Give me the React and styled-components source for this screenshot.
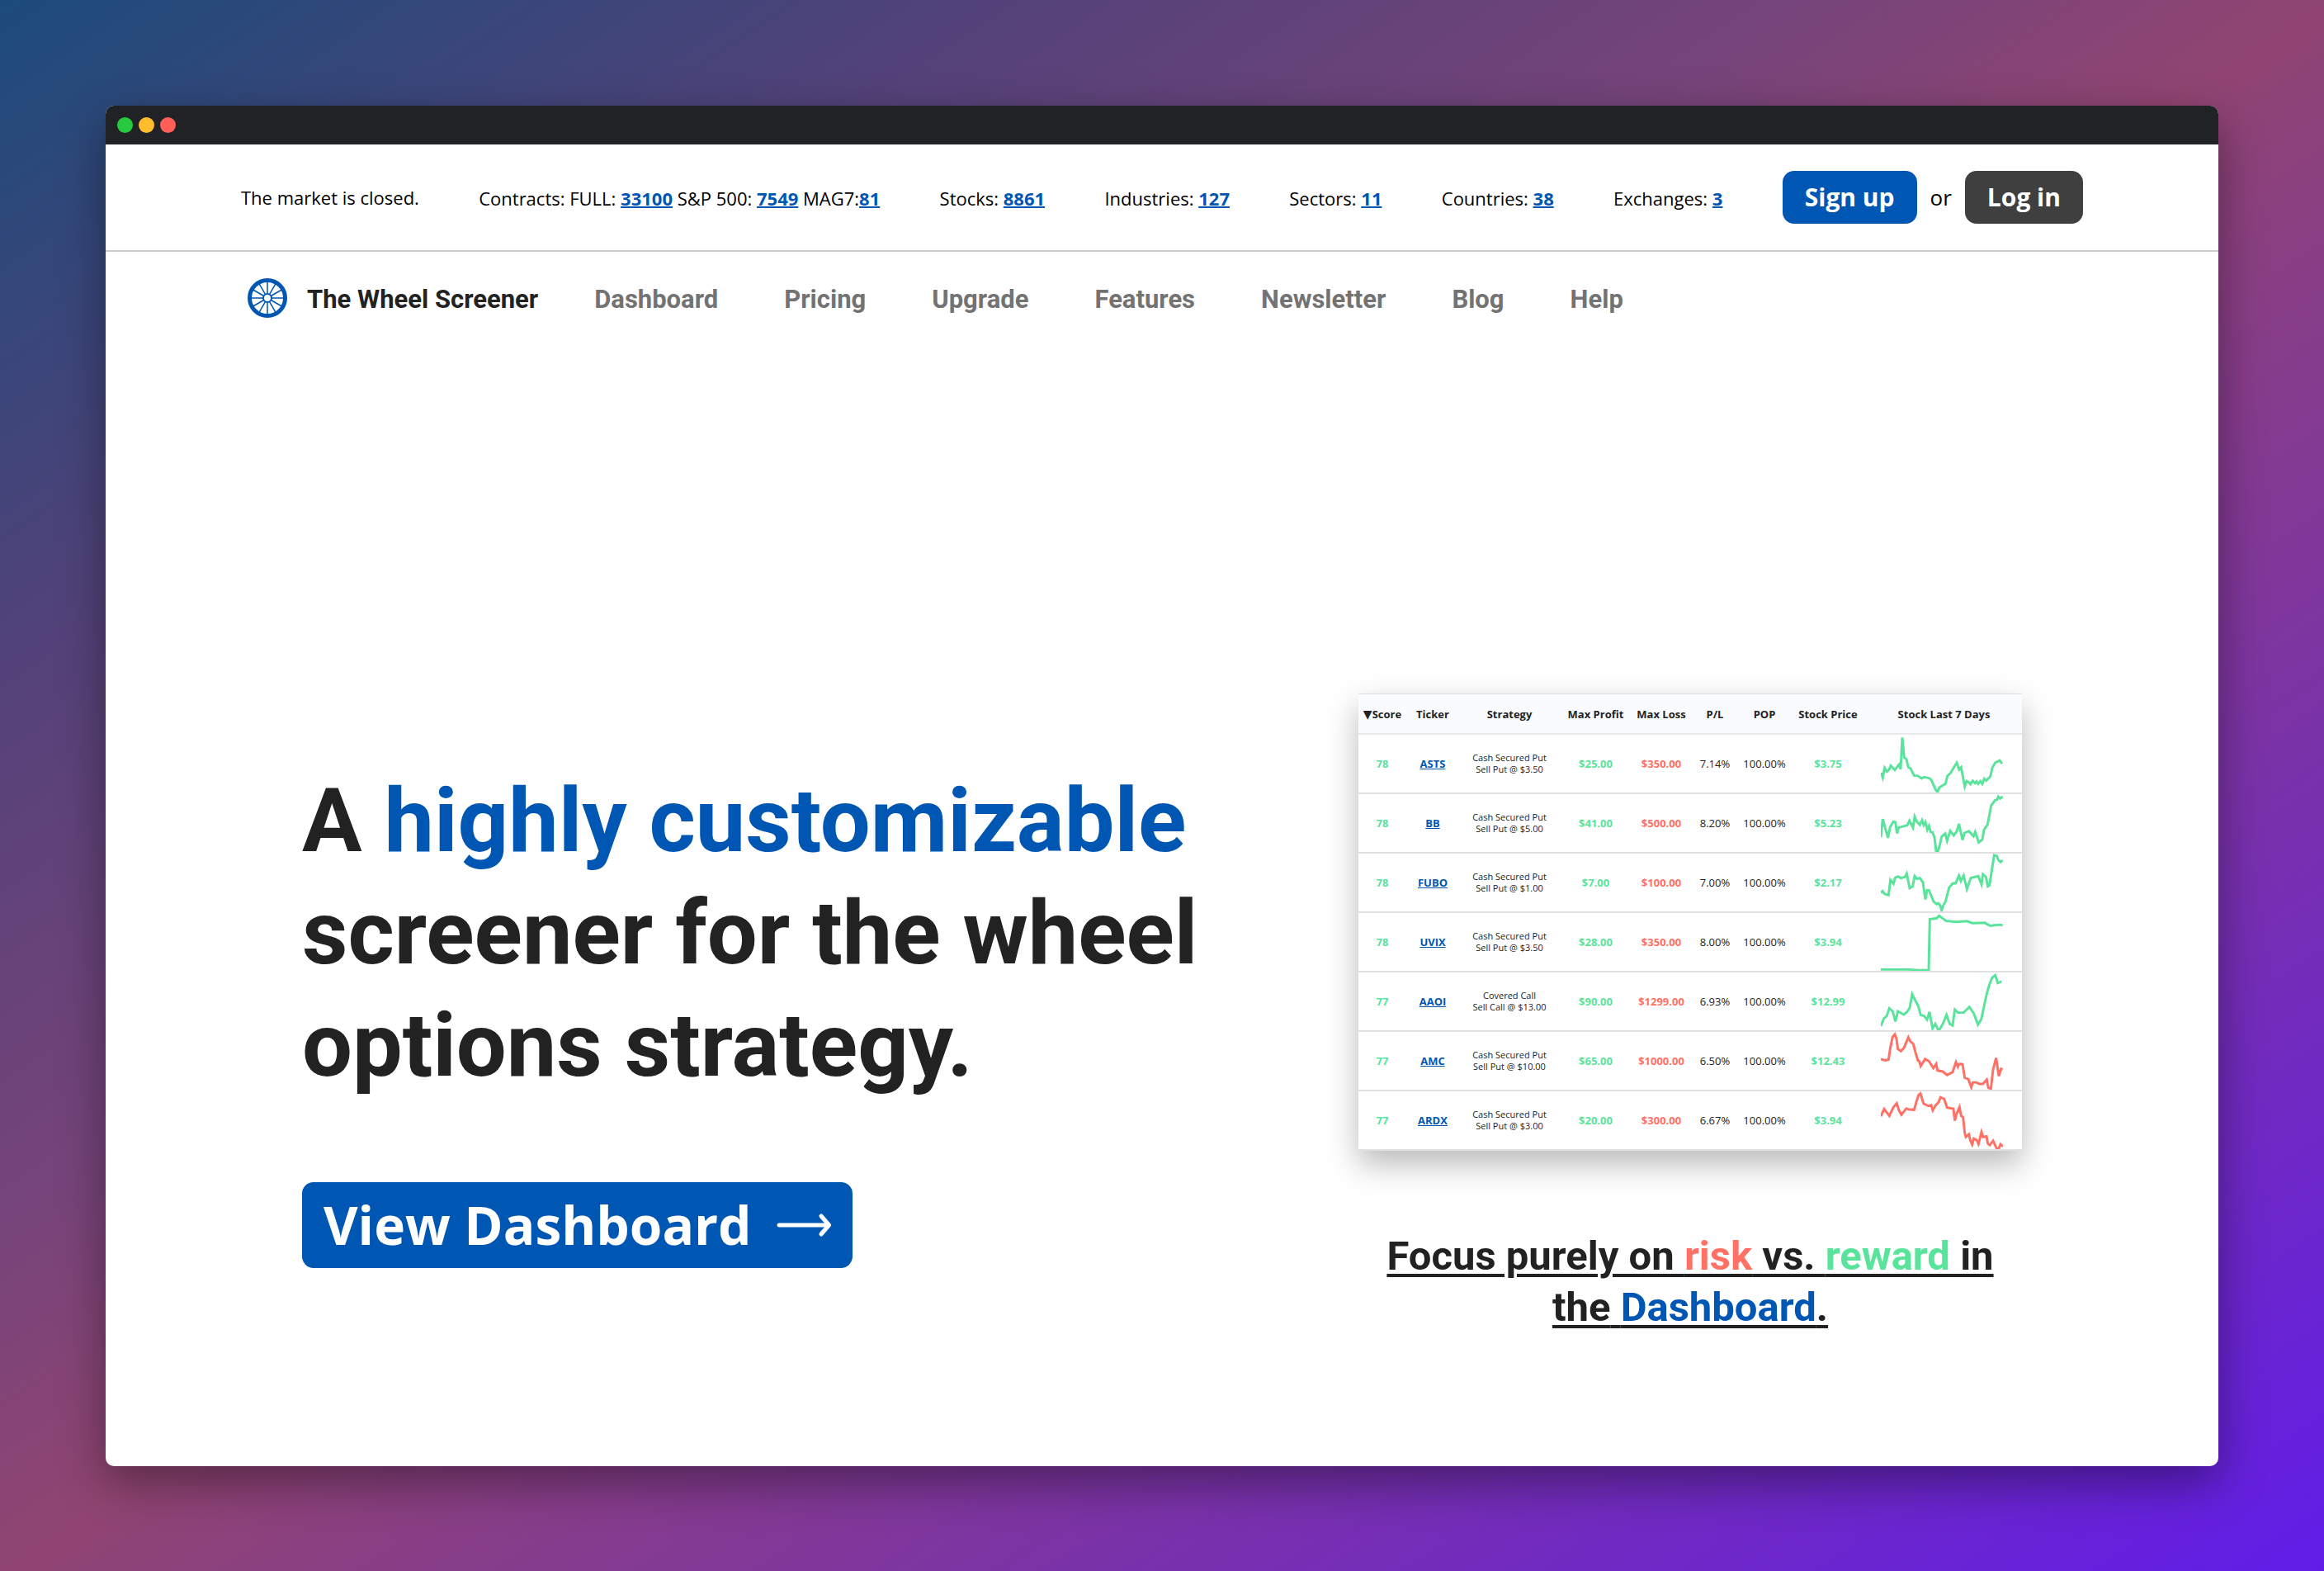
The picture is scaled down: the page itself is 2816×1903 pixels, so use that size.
import React from 'react';
import styled, { createGlobalStyle } from 'styled-components';

const body = "'Open Sans', 'Noto Sans', sans-serif";
const display = "Roboto, 'Open Sans', sans-serif";
const blue = '#0056b3';
const ink = '#222222';
const green = '#5ae49b';
const red = '#ff7065';

const GlobalStyle = createGlobalStyle`
  *, *::before, *::after { box-sizing: border-box; }
  body { margin: 0; font-family: ${body}; color: ${ink}; }
`;

const Backdrop = styled.div`
  min-height: 100vh;
  padding: 128px 128px 127px;
  display: flex;
  background: linear-gradient(to bottom right, #1c4b7b 0%, #544279 22%, #76447a 39%, #904572 50%, #611de8 100%);
`;

const BrowserWindow = styled.div`
  flex: 1;
  min-width: 0;
  display: flex;
  flex-direction: column;
  border-radius: 10px;
  overflow: hidden;
  background: #ffffff;
  box-shadow: 0 20px 56px rgba(0, 0, 0, 0.4);
`;

const TitleBar = styled.div`
  height: 47px;
  padding: 0 14px;
  display: flex;
  align-items: center;
  gap: 7px;
  background: #212226;
`;

const Light = styled.span`
  width: 19px;
  height: 19px;
  border-radius: 50%;
  background: ${(p) => p.$color};
`;

const StatusBar = styled.div`
  height: 130px;
  padding: 0 164px;
  display: flex;
  align-items: center;
  justify-content: space-between;
  border-bottom: 2px solid #cccccc;
  color: #000000;
  font-size: 22px;
  line-height: 32px;
  white-space: nowrap;
`;

const Stat = styled.span`
  padding-top: 2px;
`;

const StatLink = styled.a`
  color: ${blue};
  font-weight: 700;
  text-decoration: underline;
  text-decoration-thickness: 2px;
`;

const Account = styled.div`
  display: flex;
  align-items: center;
  gap: 16px;
  font-size: 26px;
`;

const AccountButton = styled.button`
  height: 64px;
  padding: 0 27px;
  border: 0;
  border-radius: 14px;
  background: ${(p) => (p.$dark ? '#3f3f3f' : blue)};
  color: #ffffff;
  font: 700 30px/40px ${body};
`;

const NavBar = styled.header`
  height: 112px;
  padding: 0 172px;
  display: flex;
  align-items: center;
  gap: 68px;
  font: 700 31px/40px ${display};
  white-space: nowrap;
`;

const Brand = styled.a`
  display: flex;
  align-items: center;
  gap: 24px;
  color: ${ink};
  text-decoration: none;
`;

const BrandName = styled.span`
  padding-top: 4px;
`;

const NavLinks = styled.nav`
  padding-top: 4px;
  display: flex;
  gap: 80px;
`;

const NavLink = styled.a`
  color: #737373;
  text-decoration: none;
`;

const Hero = styled.main`
  flex: 1;
  padding: 423px 238px 0;
  display: grid;
  grid-template-columns: minmax(0, 1280fr) minmax(0, 804fr);
  align-items: center;
  align-content: start;
`;

const Pitch = styled.section`
  display: flex;
  flex-direction: column;
  align-items: flex-start;
  gap: 98px;
`;

const Headline = styled.h1`
  margin: 0;
  max-width: 1160px;
  font: 700 108px/136px ${display};
`;

const Tint = styled.span`
  color: ${(p) => p.$color};
`;

const DashboardButton = styled.a`
  height: 104px;
  padding: 0 24px 0 26px;
  display: flex;
  align-items: center;
  gap: 30px;
  border-radius: 14px;
  background: ${blue};
  color: #ffffff;
  font-size: 64px;
  font-weight: 700;
  line-height: 88px;
  text-decoration: none;
  white-space: nowrap;
`;

const Preview = styled.section`
  display: flex;
  flex-direction: column;
  gap: 97px;
`;

const Screener = styled.table`
  width: 100%;
  table-layout: fixed;
  border-collapse: separate;
  border-spacing: 0;
  background: #ffffff;
  box-shadow: 0 16px 36px rgba(0, 0, 0, 0.28);
  color: ${ink};
  font-size: 13px;
  line-height: 18px;
  text-align: center;
`;

const HeadCell = styled.th`
  height: 50px;
  padding: 0;
  border-top: 1px solid #dde0e8;
  border-bottom: 2px solid #e8ebee;
  background: #fafbff;
  font-weight: 700;
  white-space: nowrap;
`;

const SortMark = styled.span`
  font: 400 14px/16px 'DejaVu Sans', sans-serif;
`;

const Cell = styled.td`
  height: 72px;
  padding: 0;
  border-bottom: 2px solid #e0e0e0;
  color: ${(p) => p.$color || ink};
  font-weight: ${(p) => (p.$color ? 700 : 400)};
`;

const StrategyCell = styled(Cell)`
  font-size: 11px;
  line-height: 14px;
`;

const ChartCell = styled(Cell)`
  padding-right: 6px;
`;

const TickerLink = styled.a`
  color: ${blue};
  font-weight: 700;
`;

const Spark = styled.svg`
  display: block;
  width: 148px;
  height: 70px;
  margin: 0 auto;
`;

const Caption = styled.h2`
  margin: 0;
  padding: 0 24px 6px;
  font: 700 49px/62px ${display};
  text-align: center;
  text-decoration: underline;
  text-decoration-thickness: 4px;
  text-underline-offset: 5px;
`;

const stats = [
  ['Stocks: ', '8861'],
  ['Industries: ', '127'],
  ['Sectors: ', '11'],
  ['Countries: ', '38'],
  ['Exchanges: ', '3'],
];

const pages = ['Dashboard', 'Pricing', 'Upgrade', 'Features', 'Newsletter', 'Blog', 'Help'];

const columns = [
  ['Score', 58],
  ['Ticker', 64],
  ['Strategy', 122],
  ['Max Profit', 87],
  ['Max Loss', 72],
  ['P/L', 58],
  ['POP', 62],
  ['Stock Price', 92],
  ['Stock Last 7 Days', 189],
];

const rows = [
  {
    score: 78, ticker: 'ASTS', kind: 'Cash Secured Put', leg: 'Sell Put @ $3.50',
    profit: '$25.00', loss: '$350.00', pl: '7.14%', price: '$3.75', trend: green,
    points: '1,140 7,158 14,122 22,136 30,129 36,114 51,130 66,110 72,127 78,10 85,84 93,90 100,120 108,124 121,151 134,151 148,161 158,156 175,160 183,166 201,206 207,210 213,194 235,181 242,152 254,140 276,103 285,128 292,120 305,191 312,171 319,175 326,182 334,170 343,179 348,172 354,181 362,171 369,181 376,162 383,169 398,154 406,120 416,103 432,95 441,107',
  },
  {
    score: 78, ticker: 'BB', kind: 'Cash Secured Put', leg: 'Sell Put @ $5.00',
    profit: '$41.00', loss: '$500.00', pl: '8.20%', price: '$5.23', trend: green,
    points: '0,159 7,92 26,161 34,121 46,101 53,103 59,145 65,123 96,115 104,98 117,123 123,83 131,102 142,113 150,96 156,114 162,103 169,131 175,117 181,139 188,141 195,159 201,209 208,209 214,189 221,157 234,145 241,172 252,135 265,152 276,137 284,109 297,169 304,143 320,136 337,155 343,139 356,178 369,167 375,131 388,112 401,42 415,23 423,20 427,9 434,16 443,9',
  },
  {
    score: 78, ticker: 'FUBO', kind: 'Cash Secured Put', leg: 'Sell Put @ $1.00',
    profit: '$7.00', loss: '$100.00', pl: '7.00%', price: '$2.17', trend: green,
    points: '0,145 6,138 14,149 28,153 35,97 46,111 52,89 62,84 73,90 88,86 94,74 105,127 116,121 123,83 131,93 142,90 153,106 162,169 168,135 175,135 192,177 203,186 209,183 216,191 221,209 227,191 235,177 248,126 260,111 272,109 284,81 291,101 301,81 313,131 327,90 354,83 366,113 371,76 382,86 389,121 395,117 412,6 422,9 427,23 435,31 443,25',
  },
  {
    score: 78, ticker: 'UVIX', kind: 'Cash Secured Put', leg: 'Sell Put @ $3.50',
    profit: '$28.00', loss: '$350.00', pl: '8.00%', price: '$3.94', trend: green,
    points: '0,208 100,208 140,211 174,211 178,23 203,19 212,10 222,18 238,29 275,33 313,30 333,37 378,36 398,47 413,45 430,43 443,45',
  },
  {
    score: 77, ticker: 'AAOI', kind: 'Covered Call', leg: 'Sell Call @ $13.00',
    profit: '$90.00', loss: '$1299.00', pl: '6.93%', price: '$12.99', trend: green,
    points: '0,198 11,169 21,161 31,132 43,143 53,181 62,143 83,155 94,147 105,131 114,80 126,105 136,123 145,157 157,160 168,174 177,145 188,206 198,189 207,209 215,208 227,186 239,156 250,189 261,195 269,137 280,148 301,148 322,127 338,151 353,192 365,173 375,126 385,79 395,44 405,19 416,10 425,39 439,33',
  },
  {
    score: 77, ticker: 'AMC', kind: 'Cash Secured Put', leg: 'Sell Put @ $10.00',
    profit: '$65.00', loss: '$1000.00', pl: '6.50%', price: '$12.43', trend: red,
    points: '0,100 16,105 28,102 35,56 43,18 51,9 57,26 62,63 73,71 84,59 100,20 106,34 118,44 126,76 135,106 140,108 145,126 161,100 175,108 191,133 201,118 206,142 225,146 241,159 261,148 273,111 280,128 285,118 297,119 305,169 318,174 329,204 334,186 347,186 358,192 371,192 385,176 391,206 400,209 408,139 419,96 429,163 437,136 443,138',
  },
  {
    score: 77, ticker: 'ARDX', kind: 'Cash Secured Put', leg: 'Sell Put @ $3.00',
    profit: '$20.00', loss: '$300.00', pl: '6.67%', price: '$3.94', trend: red,
    points: '0,92 12,65 31,90 46,58 58,44 65,68 75,86 93,63 103,67 121,68 129,40 137,14 144,8 155,45 173,54 183,51 189,70 198,53 210,40 217,22 230,28 241,60 264,64 269,108 275,84 286,58 292,90 299,95 305,153 309,168 320,158 325,180 332,196 338,174 349,180 355,194 366,150 372,168 384,166 389,192 396,198 408,182 421,210 429,210 435,195 444,203',
  },
];

function WheelLogo() {
  const spokes = Array.from({ length: 12 }, (_, i) => i * 30);
  return (
    <svg width="48" height="48" viewBox="0 0 48 48" fill="none" stroke={blue} aria-hidden="true">
      <circle cx="24" cy="24" r="21.5" strokeWidth="5" />
      <circle cx="24" cy="24" r="5" strokeWidth="2" />
      {spokes.map((a) => (
        <line key={a} x1="24" y1="18.5" x2="24" y2="4" strokeWidth="1.5" transform={`rotate(${a} 24 24)`} />
      ))}
    </svg>
  );
}

function ArrowIcon() {
  return (
    <svg width="68" height="32" viewBox="0 0 68 32" fill="none" stroke="#ffffff" strokeWidth="5" strokeLinecap="round" strokeLinejoin="round" aria-hidden="true">
      <path d="M3 16H63" />
      <path d="M54 5L63.5 16L54 27" />
    </svg>
  );
}

export default function App() {
  return (
    <Backdrop>
      <GlobalStyle />
      <BrowserWindow>
        <TitleBar>
          <Light $color="#27c93f" />
          <Light $color="#ffbd2e" />
          <Light $color="#ff5f56" />
        </TitleBar>
        <StatusBar>
          <span>The market is closed.</span>
          <Stat>
            Contracts: FULL: <StatLink href="#full">33100</StatLink> S&amp;P 500:{' '}
            <StatLink href="#sp500">7549</StatLink> MAG7:<StatLink href="#mag7">81</StatLink>
          </Stat>
          {stats.map(([label, value]) => (
            <Stat key={label}>
              {label}
              <StatLink href="#stats">{value}</StatLink>
            </Stat>
          ))}
          <Account>
            <AccountButton type="button">Sign up</AccountButton>
            <span>or</span>
            <AccountButton type="button" $dark>Log in</AccountButton>
          </Account>
        </StatusBar>
        <NavBar>
          <Brand href="#home">
            <WheelLogo />
            <BrandName>The Wheel Screener</BrandName>
          </Brand>
          <NavLinks>
            {pages.map((page) => (
              <NavLink key={page} href={`#${page.toLowerCase()}`}>{page}</NavLink>
            ))}
          </NavLinks>
        </NavBar>
        <Hero>
          <Pitch>
            <Headline>
              A <Tint $color={blue}>highly customizable</Tint> screener for the wheel options strategy.
            </Headline>
            <DashboardButton href="#dashboard">
              View Dashboard
              <ArrowIcon />
            </DashboardButton>
          </Pitch>
          <Preview>
            <Screener>
              <colgroup>
                {columns.map(([name, width]) => (
                  <col key={name} width={width} />
                ))}
              </colgroup>
              <thead>
                <tr>
                  {columns.map(([name]) => (
                    <HeadCell key={name} scope="col">
                      {name === 'Score' && <SortMark>▼</SortMark>}
                      {name}
                    </HeadCell>
                  ))}
                </tr>
              </thead>
              <tbody>
                {rows.map((row) => (
                  <tr key={row.ticker}>
                    <Cell $color={green}>{row.score}</Cell>
                    <Cell><TickerLink href="#ticker">{row.ticker}</TickerLink></Cell>
                    <StrategyCell>{row.kind}<br />{row.leg}</StrategyCell>
                    <Cell $color={green}>{row.profit}</Cell>
                    <Cell $color={red}>{row.loss}</Cell>
                    <Cell>{row.pl}</Cell>
                    <Cell>100.00%</Cell>
                    <Cell $color={green}>{row.price}</Cell>
                    <ChartCell>
                      <Spark viewBox="0 0 444 213" preserveAspectRatio="none" fill="none" stroke={row.trend} strokeWidth="9" aria-hidden="true">
                        <polyline points={row.points} />
                      </Spark>
                    </ChartCell>
                  </tr>
                ))}
              </tbody>
            </Screener>
            <Caption>
              Focus purely on <Tint $color={red}>risk</Tint> vs. <Tint $color={green}>reward</Tint> in the{' '}
              <Tint $color={blue}>Dashboard</Tint>.
            </Caption>
          </Preview>
        </Hero>
      </BrowserWindow>
    </Backdrop>
  );
}
